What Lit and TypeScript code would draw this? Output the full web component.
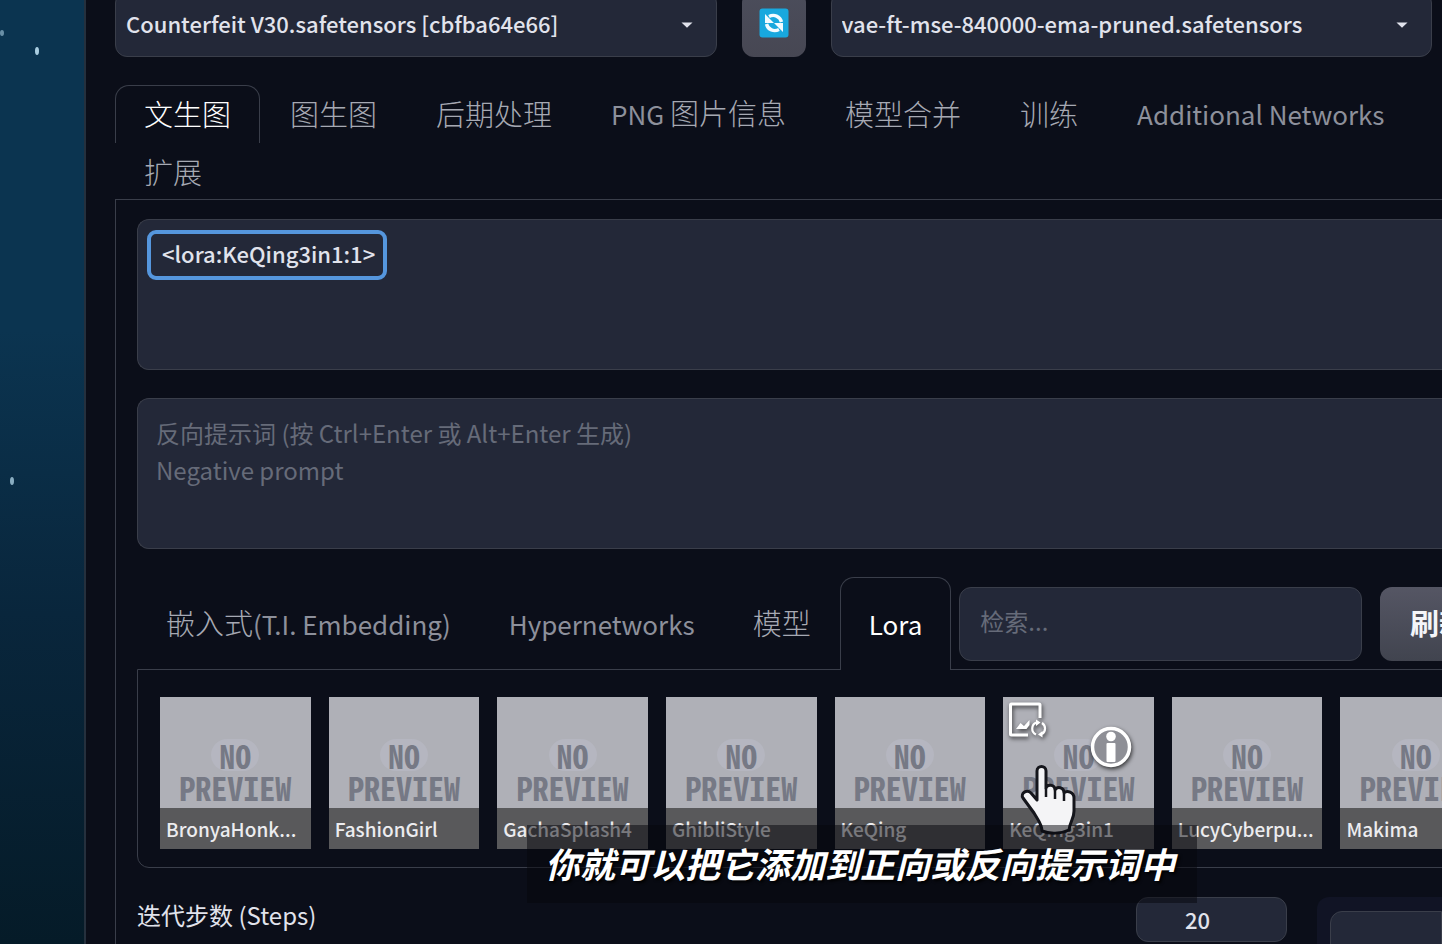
import { LitElement, html, css, svg, nothing } from "lit";
import { customElement, property, state } from "lit/decorators.js";
import { classMap } from "lit/directives/class-map.js";

const caret = svg`<svg class="caret" viewBox="0 0 12 6" aria-hidden="true"><path d="M0.5 0.5h11L6 5.8z" fill="currentColor"/></svg>`;

@customElement("lora-card")
class LoraCard extends LitElement {
  @property() name = "";
  @property({ type: Boolean }) hovered = false;

  static styles = css`
    :host {
      display: block;
      min-width: 0;
    }
    .card {
      position: relative;
      display: flex;
      flex-direction: column;
      height: 152px;
      background: #afb0b7;
    }
    .preview {
      flex: 1;
      display: flex;
      flex-direction: column;
      justify-content: flex-end;
      align-items: center;
      padding-bottom: 5px;
      font: 700 32px/32px "Noto Sans Mono CJK SC", "DejaVu Sans Mono", monospace;
      color: #767985;
    }
    .no {
      padding: 0 8px;
      border-radius: 16px;
      background: #b5b6c0;
    }
    .name {
      height: 41px;
      padding: 0 6px;
      background: #59595b;
      color: #ececef;
      font-size: 19px;
      line-height: 42px;
      font-weight: 500;
      white-space: nowrap;
      overflow: hidden;
    }
    .action {
      position: absolute;
      padding: 0;
      border: 0;
      background: none;
      line-height: 0;
      filter: drop-shadow(1px 2px 2px rgba(0, 0, 0, 0.7));
    }
    .replace {
      left: 3px;
      top: 3px;
    }
    .info {
      left: 86px;
      top: 28px;
    }
  `;

  render() {
    return html`
      <article class="card">
        <div class="preview"><span class="no">NO</span><span>PREVIEW</span></div>
        <div class="name">${this.name}</div>
        ${this.hovered
          ? html`
              <button class="action replace" aria-label="替换预览图">
                <svg width="42" height="40" viewBox="0 0 42 40" fill="none" stroke="#fff">
                  <path d="M34 18V5Q34 4 33 4H5.500Q4.500 4 4.500 5V34Q4.500 35 5.500 35H22" stroke-width="3" />
                  <path d="M10 29l4.500-6 3.500 3 5.500-6v5l-3 4z" fill="#fff" stroke="none" />
                  <path d="M30 34.500A6.500 6.500 0 0 1 30.500 22.500M36 34A6.500 6.500 0 0 0 36 23" stroke-width="2.200" />
                  <path d="M30 19.500l4.500 3-4.500 3.500zM36.500 31v6.500L32 34.500z" fill="#fff" stroke="none" />
                </svg>
              </button>
              <button class="action info" aria-label="元数据">
                <svg width="44" height="44" viewBox="0 0 44 44">
                  <circle cx="22" cy="22" r="18.5" fill="#8e8f96" stroke="#fff" stroke-width="3.5" />
                  <circle cx="22" cy="11.5" r="4.8" fill="#fff" />
                  <rect x="17.5" y="18" width="9" height="19" rx="1" fill="#fff" />
                </svg>
              </button>
            `
          : nothing}
      </article>
    `;
  }
}

@customElement("app-root")
class AppRoot extends LitElement {
  @state() private tab = "文生图";
  @state() private network = "Lora";

  private tabs = ["文生图", "图生图", "后期处理", "PNG 图片信息", "模型合并", "训练", "Additional Networks", "扩展"];
  private networks = ["嵌入式(T.I. Embedding)", "Hypernetworks", "模型", "Lora"];
  private cards = [
    "BronyaHonk...",
    "FashionGirl",
    "GachaSplash4",
    "GhibliStyle",
    "KeQing",
    "KeQing3in1",
    "LucyCyberpu...",
    "Makima",
  ];

  static styles = css`
    * {
      box-sizing: border-box;
    }
    :host {
      --line: #3a3e4a;
      --field: #232838;
      --text: #e1e3ec;
      --muted: #8d909b;
      position: relative;
      display: flex;
      height: 100vh;
      overflow: hidden;
      background: #0b0e19;
      color: var(--text);
      font-family: "Noto Sans CJK SC", "Noto Sans", sans-serif;
      font-size: 24px;
    }
    button,
    input,
    select,
    textarea {
      font: inherit;
      color: inherit;
      margin: 0;
      outline: 0;
    }
    .desktop {
      flex: 0 0 84px;
      background: linear-gradient(#0b3450, #0b3450 35%, #09263c 65%, #051b28);
    }
    .desktop svg {
      display: block;
      width: 84px;
      height: 500px;
    }
    .app {
      flex: 1;
      min-width: 0;
      padding-left: 29px;
      border-left: 2px solid #25303d;
    }
    .models {
      display: flex;
      gap: 25px;
      margin-top: -9px;
      padding-right: 10px;
    }
    .select {
      flex: 1;
      position: relative;
      min-width: 0;
    }
    .select select {
      width: 100%;
      height: 66px;
      padding: 0 40px 2px 10px;
      appearance: none;
      border: 1px solid var(--line);
      border-radius: 12px;
      background: var(--field);
      font-size: 22px;
      font-weight: 500;
    }
    .caret {
      position: absolute;
      right: 24px;
      top: 31px;
      width: 12px;
      height: 6px;
      pointer-events: none;
    }
    .reload {
      flex: 0 0 64px;
      height: 66px;
      padding: 0 0 2px;
      border: 0;
      border-radius: 12px;
      background: linear-gradient(#4b4d5b, #474753);
      line-height: 0;
    }
    .tabs {
      display: flex;
      flex-wrap: wrap;
      column-gap: 1px;
      margin-top: 28px;
      margin-bottom: -2px;
    }
    .tab {
      flex: none;
      height: 58px;
      padding: 0 28px 4px;
      border: 1px solid transparent;
      border-bottom: 0;
      border-radius: 14px 14px 0 0;
      background: none;
      color: #a6a9b3;
      font-size: 29px;
      font-weight: 300;
      line-height: 52px;
      white-space: nowrap;
    }
    .latin {
      color: var(--muted);
      font-size: 26px;
      font-weight: 400;
    }
    .tab.on,
    .tab.on .latin {
      border-color: var(--line);
      color: #fff;
    }
    .page {
      border: 1px solid var(--line);
      border-right: 0;
      border-bottom: 0;
      padding: 19px 0 0 21px;
    }
    .prompt {
      position: relative;
      display: block;
      height: 151px;
      margin-bottom: 28px;
    }
    .prompt textarea {
      display: block;
      width: 100%;
      height: 100%;
      padding: 15px 18px;
      border: 1px solid var(--line);
      border-right: 0;
      border-radius: 12px 0 0 12px;
      background: var(--field);
      line-height: 37px;
      resize: none;
    }
    .prompt.positive textarea {
      padding-left: 24px;
      font-size: 22px;
      font-weight: 500;
    }
    .mark {
      position: absolute;
      left: 10px;
      top: 11px;
      width: 240px;
      height: 50px;
      border: 4px solid #5596dd;
      border-radius: 9px;
      pointer-events: none;
    }
    ::placeholder {
      color: #666b79;
      opacity: 1;
    }
    .nets {
      display: flex;
      align-items: center;
      height: 93px;
      margin-bottom: -1px;
      position: relative;
      margin-right: -60px;
    }
    .nets .tab {
      height: 93px;
      line-height: 88px;
    }
    .nets .tab.on {
      background: #0b0e19;
    }
    .search {
      flex: 1;
      min-width: 0;
      height: 74px;
      margin-left: 8px;
      padding: 0 20px 6px;
      border: 1px solid var(--line);
      border-radius: 12px;
      background: var(--field);
    }
    .refresh {
      flex: 0 0 122px;
      height: 74px;
      margin-left: 18px;
      padding: 0 4px 3px 0;
      border: 0;
      border-radius: 12px;
      background: linear-gradient(#555664, #41444f);
      color: #f4f5f9;
      font-size: 29px;
      font-weight: 700;
    }
    .gallery {
      display: grid;
      grid-template-columns: repeat(8, 1fr);
      gap: 18px;
      margin-right: -72px;
      padding: 27px 22px 18px;
      border: 1px solid var(--line);
      border-radius: 0 0 12px 12px;
    }
    .settings {
      display: flex;
      align-items: flex-start;
      margin-top: 29px;
    }
    .settings label {
      flex: 1;
      line-height: 35px;
    }
    .steps {
      width: 151px;
      height: 45px;
      border: 1px solid var(--line);
      border-radius: 12px;
      background: var(--field);
      padding: 0 28px 2px 0;
      font-size: 22px;
      font-weight: 500;
      text-align: center;
      appearance: textfield;
    }
    .steps::-webkit-inner-spin-button {
      display: none;
    }
    .side {
      flex: 0 0 125px;
      height: 120px;
      margin-left: 30px;
      padding: 14px 0 0 13px;
      border-radius: 12px 0 0 0;
      background: #111425;
    }
    .side div {
      height: 100px;
      border: 1px solid var(--line);
      border-radius: 12px 0 0 0;
      background: var(--field);
    }
    .caption {
      position: absolute;
      left: 527px;
      top: 825px;
      margin: 0;
      padding: 0 22px 2px 18px;
      background: rgba(5, 6, 12, 0.5);
      color: #fff;
      font-size: 35px;
      font-style: italic;
      font-weight: 700;
      line-height: 76px;
      white-space: nowrap;
      text-shadow: 2px 2px 3px #000;
    }
    .pointer {
      position: absolute;
      left: 1020px;
      top: 764px;
    }
  `;

  private tabButton(name: string, active: string, pick: (n: string) => void) {
    const parts = name.split(/([\x20-\x7e]+)/).filter(Boolean);
    return html`<button
      role="tab"
      aria-selected=${name === active}
      class=${classMap({ tab: true, on: name === active })}
      @click=${() => pick(name)}
    >${parts.map((p) => (/^[\x20-\x7e]/.test(p) ? html`<span class="latin">${p}</span>` : p))}</button>`;
  }

  render() {
    return html`
      <div class="desktop">
        <svg viewBox="0 0 84 500" fill="#a9cde0" aria-hidden="true">
          <ellipse cx="37" cy="51" rx="2" ry="4" />
          <ellipse cx="2" cy="33" rx="2" ry="3" opacity="0.6" />
          <ellipse cx="12" cy="481" rx="2" ry="4" opacity="0.8" />
        </svg>
      </div>
      <main class="app">
        <div class="models">
          <div class="select">
            <select aria-label="Stable Diffusion 模型"><option>Counterfeit V30.safetensors [cbfba64e66]</option></select>
            ${caret}
          </div>
          <button class="reload" aria-label="刷新模型">
            <svg width="30" height="30" viewBox="0 0 30 30">
              <rect x="0.5" y="0.5" width="29" height="29" rx="3" fill="#18a8de" />
              <g fill="none" stroke="#f2fbff" stroke-width="3.4">
                <path d="M10 8.500C15 6 21 8 22.500 14" />
                <path d="M20 21.500C15 24 9 22 7.500 16" />
              </g>
              <path d="M6 6v9h9zM24 24v-9h-9z" fill="#f2fbff" />
            </svg>
          </button>
          <div class="select">
            <select aria-label="VAE 模型"><option>vae-ft-mse-840000-ema-pruned.safetensors</option></select>
            ${caret}
          </div>
        </div>
        <nav class="tabs" role="tablist">
          ${this.tabs.map((t) => this.tabButton(t, this.tab, (n) => (this.tab = n)))}
        </nav>
        <section class="page">
          <div class="prompt positive">
            <textarea aria-label="提示词" spellcheck="false" .value=${"<lora:KeQing3in1:1>"}></textarea>
            <div class="mark"></div>
          </div>
          <div class="prompt">
            <textarea aria-label="反向提示词" placeholder=${"反向提示词 (按 Ctrl+Enter 或 Alt+Enter 生成)\nNegative prompt"}></textarea>
          </div>
          <div class="nets" role="tablist">
            ${this.networks.map((t) => this.tabButton(t, this.network, (n) => (this.network = n)))}
            <input class="search" type="search" aria-label="检索" placeholder="检索..." />
            <button class="refresh">刷新</button>
          </div>
          <div class="gallery">
            ${this.cards.map((c) => html`<lora-card name=${c} ?hovered=${c === "KeQing3in1"}></lora-card>`)}
          </div>
          <div class="settings">
            <label for="steps">迭代步数 (Steps)</label>
            <input id="steps" class="steps" type="number" value="20" />
            <div class="side"><div></div></div>
          </div>
        </section>
      </main>
      <svg class="pointer" width="60" height="72" viewBox="0 0 60 72" aria-hidden="true">
        <path
          d="M17 7c0-6 9-6 9 0v17c1-4 9-4 9 2 2-4 9-3 9 3 3-3 10-1 10 5v13c0 8-4 10-5 19-8 4-20 4-27 1 0-7-4-11-8-18L3 34c-3-5 4-9 8-5l6 7z"
          fill="#f4f4f6"
          stroke="#15161c"
          stroke-width="3"
          stroke-linejoin="round"
        />
        <path d="M26 24v9M35 27v8M44 30v7" stroke="#15161c" stroke-width="2.500" />
      </svg>
      <p class="caption">你就可以把它添加到正向或反向提示词中</p>
    `;
  }
}
